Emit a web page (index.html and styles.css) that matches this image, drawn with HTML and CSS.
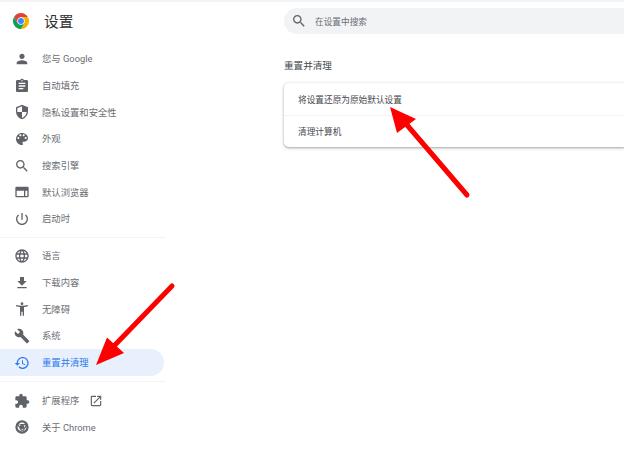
FILE: index.html
```html
<!DOCTYPE html>
<html lang="zh-CN">
<head>
    <meta charset="UTF-8">
    <title>设置 - 重置并清理</title>
    <link rel="stylesheet" href="styles.css">
</head>
<body>
    <div class="top-strip"></div>
    <div class="page">
        <div class="sidebar">
            <div class="brand">
                <svg class="logo" viewBox="0 0 24 24">
                    <path fill="#db4437" d="M12 0A12 12 0 0 0 1.6 6l5.2 9L12 6.500h10.400A12 12 0 0 0 12 0z"/>
                    <path fill="#f4b400" d="M22.400 6H12l5.200 9-5.200 9A12 12 0 0 0 22.400 6z"/>
                    <path fill="#0f9d58" d="M1.600 6A12 12 0 0 0 12 24l5.200-9H6.800z"/>
                    <circle cx="12" cy="12" r="5.500" fill="#fff"/>
                    <circle cx="12" cy="12" r="4.400" fill="#4285f4"/>
                </svg>
                <span class="brand-title">设置</span>
            </div>

            <div class="nav-item">
                <svg class="icon" viewBox="0 0 24 24"><path d="M12 12c2.210 0 4-1.790 4-4s-1.790-4-4-4-4 1.790-4 4 1.790 4 4 4zm0 2c-2.670 0-8 1.340-8 4v2h16v-2c0-2.660-5.330-4-8-4z"/></svg>
                <span>您与 Google</span>
            </div>
            <div class="nav-item">
                <svg class="icon" viewBox="0 0 24 24"><path d="M19 3h-4.180C14.400 1.840 13.300 1 12 1c-1.300 0-2.400.84-2.820 2H5c-1.100 0-2 .9-2 2v14c0 1.100.9 2 2 2h14c1.100 0 2-.9 2-2V5c0-1.100-.9-2-2-2zm-7 0c.55 0 1 .45 1 1s-.45 1-1 1-1-.45-1-1 .45-1 1-1zm2 14H7v-2h7v2zm3-4H7v-2h10v2zm0-4H7V7h10v2z"/></svg>
                <span>自动填充</span>
            </div>
            <div class="nav-item">
                <svg class="icon" viewBox="0 0 24 24"><path d="M12 1L3 5v6c0 5.550 3.840 10.740 9 12 5.160-1.260 9-6.450 9-12V5l-9-4zm0 10.990h7c-.53 4.120-3.280 7.790-7 8.940V12H5V6.300l7-3.110v8.800z"/></svg>
                <span>隐私设置和安全性</span>
            </div>
            <div class="nav-item">
                <svg class="icon" viewBox="0 0 24 24"><path d="M12 3c-4.970 0-9 4.030-9 9s4.030 9 9 9c.83 0 1.500-.67 1.500-1.500 0-.39-.15-.74-.39-1.010-.23-.26-.38-.61-.38-.99 0-.83.67-1.500 1.500-1.500H16c2.760 0 5-2.240 5-5 0-4.420-4.030-8-9-8zm-5.500 9c-.83 0-1.500-.67-1.500-1.500S5.670 9 6.500 9 8 9.670 8 10.500 7.330 12 6.500 12zm3-4C8.670 8 8 7.330 8 6.500S8.670 5 9.500 5s1.500.67 1.500 1.500S10.330 8 9.500 8zm5 0c-.83 0-1.500-.67-1.500-1.500S13.670 5 14.500 5s1.500.67 1.500 1.500S15.330 8 14.500 8zm3 4c-.83 0-1.500-.67-1.500-1.500S16.670 9 17.500 9s1.500.67 1.500 1.500-.67 1.500-1.500 1.500z"/></svg>
                <span>外观</span>
            </div>
            <div class="nav-item">
                <svg class="icon" viewBox="0 0 24 24"><path d="M15.500 14h-.79l-.28-.27C15.410 12.590 16 11.110 16 9.500 16 5.910 13.090 3 9.500 3S3 5.910 3 9.500 5.910 16 9.500 16c1.610 0 3.090-.59 4.230-1.570l.27.28v.79l5 4.990L20.490 19l-4.990-5zm-6 0C7.010 14 5 11.990 5 9.500S7.010 5 9.500 5 14 7.010 14 9.500 11.990 14 9.500 14z"/></svg>
                <span>搜索引擎</span>
            </div>
            <div class="nav-item">
                <svg class="icon" viewBox="0 0 24 24"><path fill-rule="evenodd" d="M4 4h16a2 2 0 0 1 2 2v12a2 2 0 0 1-2 2H4a2 2 0 0 1-2-2V6a2 2 0 0 1 2-2zm0 6v8h11v-8zm13 0v8h3v-8z"/></svg>
                <span>默认浏览器</span>
            </div>
            <div class="nav-item">
                <svg class="icon" viewBox="0 0 24 24"><path d="M13 3h-2v10h2V3zm4.830 2.170l-1.420 1.420C17.990 7.860 19 9.810 19 12c0 3.870-3.130 7-7 7s-7-3.130-7-7c0-2.190 1.010-4.140 2.580-5.420L6.170 5.170C4.230 6.820 3 9.260 3 12c0 4.970 4.030 9 9 9s9-4.030 9-9c0-2.740-1.230-5.180-3.170-6.830z"/></svg>
                <span>启动时</span>
            </div>

            <div class="nav-sep"></div>

            <div class="nav-item">
                <svg class="icon" viewBox="0 0 24 24"><path d="M11.990 2C6.470 2 2 6.480 2 12s4.470 10 9.990 10C17.520 22 22 17.520 22 12S17.520 2 11.990 2zm6.930 6h-2.950c-.32-1.250-.78-2.450-1.380-3.560 1.840.63 3.370 1.910 4.330 3.560zM12 4.040c.83 1.200 1.480 2.530 1.910 3.960h-3.820c.43-1.430 1.080-2.760 1.910-3.960zM4.260 14C4.100 13.360 4 12.690 4 12s.1-1.360.26-2h3.380c-.08.66-.14 1.320-.14 2 0 .68.06 1.340.14 2H4.260zm.82 2h2.950c.32 1.250.78 2.450 1.380 3.560-1.840-.63-3.370-1.900-4.330-3.560zm2.950-8H5.080c.96-1.660 2.490-2.930 4.330-3.560C8.810 5.550 8.350 6.750 8.030 8zM12 19.960c-.83-1.200-1.480-2.530-1.910-3.960h3.820c-.43 1.430-1.080 2.760-1.910 3.960zM14.340 14H9.660c-.09-.66-.16-1.320-.16-2 0-.68.07-1.350.16-2h4.680c.09.65.16 1.320.16 2 0 .68-.07 1.340-.16 2zm.25 5.560c.6-1.110 1.060-2.310 1.380-3.560h2.950c-.96 1.650-2.490 2.930-4.330 3.560zM16.360 14c.08-.66.14-1.320.14-2 0-.68-.06-1.340-.14-2h3.380c.16.64.26 1.310.26 2s-.1 1.360-.26 2h-3.380z"/></svg>
                <span>语言</span>
            </div>
            <div class="nav-item">
                <svg class="icon" viewBox="0 0 24 24"><path d="M19 9h-4V3H9v6H5l7 7 7-7zM5 18v2h14v-2H5z"/></svg>
                <span>下载内容</span>
            </div>
            <div class="nav-item">
                <svg class="icon" viewBox="0 0 24 24"><path d="M20.500 6c-2.610.7-5.670 1-8.500 1s-5.890-.3-8.500-1L3 8c1.860.5 4 .83 6 1v13h2v-6h2v6h2V9c2-.17 4.140-.5 6-1l-.5-2zM12 6c1.100 0 2-.9 2-2s-.9-2-2-2-2 .9-2 2 .9 2 2 2z"/></svg>
                <span>无障碍</span>
            </div>
            <div class="nav-item">
                <svg class="icon" viewBox="0 0 24 24"><path d="M22.700 19l-9.100-9.100c.9-2.300.4-5-1.500-6.900-2-2-5-2.400-7.400-1.300L9 6 6 9 1.600 4.700C.4 7.100.9 10.100 2.900 12.100c1.900 1.900 4.600 2.400 6.900 1.500l9.100 9.100c.4.4 1 .4 1.400 0l2.300-2.300c.5-.4.5-1.100.1-1.400z"/></svg>
                <span>系统</span>
            </div>
            <div class="nav-item active">
                <svg class="icon" viewBox="0 0 24 24"><path d="M13 3c-4.970 0-9 4.030-9 9H1l3.890 3.890.07.14L9 12H6c0-3.870 3.130-7 7-7s7 3.130 7 7-3.130 7-7 7c-1.930 0-3.680-.79-4.940-2.060l-1.420 1.420C8.270 19.990 10.510 21 13 21c4.970 0 9-4.030 9-9s-4.030-9-9-9zm-1 5v5l4.280 2.540.72-1.210-3.500-2.080V8H12z"/></svg>
                <span>重置并清理</span>
            </div>

            <div class="nav-sep nav-sep-low"></div>

            <div class="nav-item">
                <svg class="icon" viewBox="0 0 24 24"><path d="M20.500 11H19V7c0-1.100-.9-2-2-2h-4V3.500C13 2.120 11.880 1 10.500 1S8 2.120 8 3.500V5H4c-1.100 0-1.990.9-1.990 2v3.800H3.500c1.490 0 2.700 1.210 2.700 2.700s-1.210 2.700-2.700 2.700H2V20c0 1.100.9 2 2 2h3.800v-1.500c0-1.490 1.210-2.700 2.700-2.700 1.490 0 2.700 1.210 2.700 2.700V22H17c1.100 0 2-.9 2-2v-4h1.500c1.380 0 2.500-1.120 2.500-2.500S21.880 11 20.500 11z"/></svg>
                <span>扩展程序</span>
                <svg class="icon icon-external" viewBox="0 0 24 24"><path d="M19 19H5V5h7V3H5c-1.110 0-2 .9-2 2v14c0 1.100.89 2 2 2h14c1.100 0 2-.9 2-2v-7h-2v7zM14 3v2h3.590l-9.830 9.830 1.410 1.410L19 6.410V10h2V3h-7z"/></svg>
            </div>
            <div class="nav-item">
                <svg class="icon" viewBox="0 0 24 24">
                    <path fill-rule="evenodd" d="M12 2a10 10 0 1 0 0 20 10 10 0 0 0 0-20zm0 3.400a6.600 6.600 0 1 1 0 13.200 6.600 6.600 0 0 1 0-13.200z"/>
                    <path d="M6 7.500h12.500v2H12zM17.800 9l1.700 1-5.500 8.500-1.700-1zM5.500 9.500l1.700-1 5.300 9-1.700 1z"/>
                    <circle cx="12" cy="12" r="3.400"/>
                </svg>
                <span>关于 Chrome</span>
            </div>
        </div>

        <div class="main">
            <div class="search">
                <svg class="icon" viewBox="0 0 24 24"><path d="M15.500 14h-.79l-.28-.27C15.410 12.590 16 11.110 16 9.500 16 5.910 13.090 3 9.500 3S3 5.910 3 9.500 5.910 16 9.500 16c1.610 0 3.090-.59 4.230-1.570l.27.28v.79l5 4.990L20.490 19l-4.990-5zm-6 0C7.010 14 5 11.990 5 9.500S7.010 5 9.500 5 14 7.010 14 9.500 11.990 14 9.500 14z"/></svg>
                <span>在设置中搜索</span>
            </div>
            <h2 class="section-title">重置并清理</h2>
            <div class="card">
                <div class="card-row">将设置还原为原始默认设置</div>
                <div class="card-row">清理计算机</div>
            </div>
        </div>
    </div>

    <!-- red annotation arrows drawn over the screenshot -->
    <svg class="arrows" viewBox="0 0 624 452">
        <path class="arrow-shaft" d="M172 286L113 347"/>
        <path class="arrow-head" d="M96 365L107 337.500L124 353z"/>
        <path class="arrow-shaft" d="M467 195L407 125"/>
        <path class="arrow-head" d="M390 107L416 119L397 133z"/>
    </svg>
</body>
</html>
```

FILE: styles.css
```css
:root {
    --text-color: #6a6e73;
    --icon-color: #5f6368;
    --dark-text: #45484c;
    --blue: #2f7de9;
    --line: #f1f3f4;
}

html, body {
    height: 100%;
}

body {
    margin: 0;
    background: #fff;
    color: var(--text-color);
    font-family: Roboto, "Noto Sans CJK SC", sans-serif;
    overflow: hidden;
    position: relative;
}

.top-strip {
    height: 2px;
    background: var(--line);
}

.page {
    display: flex;
}

.sidebar {
    width: 166px;
    flex-shrink: 0;
}

.brand {
    height: 38px;
    margin-bottom: 5.67px;
    display: flex;
    align-items: center;
    padding-left: 13px;
}

.logo {
    width: 16px;
    height: 16px;
}

.brand-title {
    margin-left: 15px;
    margin-bottom: 2px;
    font-size: 14.67px;
    color: #303134;
}

.nav-item {
    height: 26.67px;
    width: 164px;
    box-sizing: border-box;
    padding-left: 13.5px;
    display: flex;
    align-items: center;
    font-size: 9.33px;
}

.nav-item span {
    margin-left: 12.5px;
    margin-bottom: 1px;
}

.nav-item.active {
    background: #e8f0fe;
    color: var(--blue);
    border-radius: 0 13.33px 13.33px 0;
}

.icon {
    width: 16px;
    height: 16px;
    flex-shrink: 0;
    fill: var(--icon-color);
}

.nav-item.active .icon {
    fill: var(--blue);
}

.icon-external {
    width: 14px;
    height: 14px;
    margin-left: 10px;
}

.nav-sep {
    height: 1px;
    background: var(--line);
    margin: 4.67px 0;
}

.nav-sep-low {
    margin: 5px 0 5.67px;
}

.main {
    padding-left: 118px;
    flex: 1;
    min-width: 0;
}

.search {
    height: 26px;
    margin-top: 6px;
    border-radius: 13px 0 0 13px;
    background: #f1f3f4;
    display: flex;
    align-items: center;
    padding-left: 7px;
    font-size: 8.67px;
}

.search span {
    margin-left: 8px;
    margin-bottom: 1px;
}

.section-title {
    margin: 26px 0 11px;
    font-size: 9.6px;
    line-height: 12px;
    font-weight: 400;
    color: var(--dark-text);
}

.card {
    border-radius: 5px 0 0 5px;
    background: #fff;
    box-shadow: 0 1px 2px rgba(60, 64, 67, 0.3), 0 1px 3px 1px rgba(60, 64, 67, 0.15);
}

.card-row {
    height: 32px;
    display: flex;
    align-items: center;
    padding-left: 14px;
    padding-bottom: 1px;
    box-sizing: border-box;
    font-size: 8.67px;
    color: var(--dark-text);
}

.card-row + .card-row {
    border-top: 1px solid var(--line);
}

.arrows {
    position: absolute;
    top: 0;
    left: 0;
    width: 624px;
    height: 452px;
    pointer-events: none;
}

.arrow-shaft {
    fill: none;
    stroke: #f00;
    stroke-width: 5;
    stroke-linecap: round;
}

.arrow-head {
    fill: #f00;
}
```
